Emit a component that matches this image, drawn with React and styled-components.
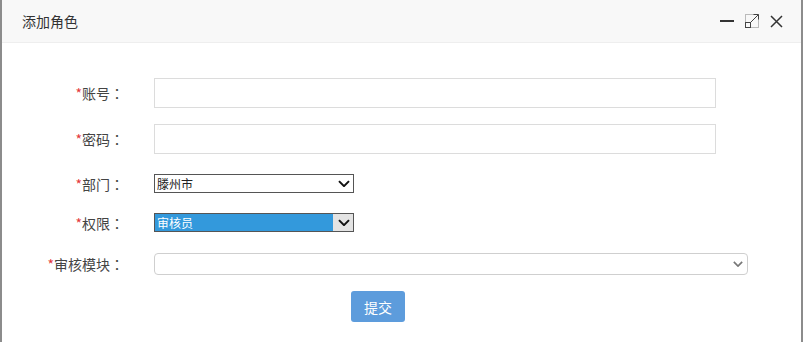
import React from 'react';
import styled, { createGlobalStyle } from 'styled-components';

const GlobalStyle = createGlobalStyle`
  html, body {
    margin: 0;
    padding: 0;
    background: #fff;
  }
  body {
    font-family: "Microsoft YaHei", "Noto Sans CJK SC", "Liberation Sans", sans-serif;
  }
`;

const Dialog = styled.div`
  width: 803px;
  height: 342px;
  box-sizing: border-box;
  border-left: 2px solid #8c8c8c;
  border-right: 2px solid #8c8c8c;
  background: #fff;
  overflow: hidden;
`;

const Header = styled.div`
  height: 42px;
  background: #f8f8f8;
  border-bottom: 1px solid #eee;
  display: flex;
  align-items: center;
  justify-content: space-between;
  padding: 0 17px 0 20px;
`;

const Title = styled.div`
  font-size: 14px;
  color: #333;
`;

const Tools = styled.div`
  display: flex;
  align-items: center;
  gap: 10px;
`;

const ToolBtn = styled.span`
  width: 15px;
  height: 15px;
  display: flex;
  align-items: center;
  justify-content: center;
  cursor: pointer;
`;

const Form = styled.form`
  padding-top: 35px;
  display: flex;
  flex-direction: column;
`;

const Row = styled.div`
  display: flex;
  align-items: center;
  height: ${(p) => p.h}px;
  margin-bottom: ${(p) => p.mb}px;
`;

const Label = styled.label`
  width: 122px;
  text-align: right;
  font-size: 14px;
  color: #444;
  flex-shrink: 0;
  margin-right: 30px;
  white-space: nowrap;
`;

const Star = styled.span`
  color: #e4393c;
`;

const Colon = styled.span`
  font-family: "Noto Sans CJK TC", sans-serif;
`;

const TextInput = styled.input`
  display: block;
  width: 562px;
  height: 30px;
  box-sizing: border-box;
  border: 1px solid #dcdcdc;
  outline: none;
  padding: 0 6px;
  font-size: 13px;
`;

const SelectWrap = styled.div`
  position: relative;
  width: ${(p) => p.w}px;
  height: ${(p) => p.h}px;
`;

const NativeSelect = styled.select`
  display: block;
  appearance: none;
  width: 100%;
  height: 100%;
  box-sizing: border-box;
  margin: 0;
  padding: 0 22px 0 2px;
  font-family: inherit;
  font-size: 12px;
  line-height: 1;
  border: 1px solid ${(p) => (p.soft ? '#cfcfcf' : '#555')};
  border-radius: ${(p) => (p.soft ? '4px' : '0')};
  background: ${(p) =>
    p.highlight
      ? 'linear-gradient(to right, #3399dc 0, #3399dc calc(100% - 20px), #e3e3e3 calc(100% - 20px))'
      : '#fff'};
  color: ${(p) => (p.highlight ? '#fff' : '#222')};
  outline: none;
`;

const Arrow = styled.span`
  position: absolute;
  right: ${(p) => p.r}px;
  top: 0;
  bottom: 0;
  display: flex;
  align-items: center;
  pointer-events: none;
`;

const SubmitRow = styled.div`
  padding-left: 349px;
`;

const Submit = styled.button`
  width: 54px;
  height: 31px;
  border: none;
  border-radius: 3px;
  background: #5d9cdc;
  color: #fff;
  font-family: inherit;
  font-size: 14px;
  cursor: pointer;
`;

const Chevron = ({ color = '#111', w = 12 }) => (
  <svg width={w} height={w * 0.6} viewBox="0 0 12 7">
    <path d="M1 1 L6 6 L11 1" fill="none" stroke={color} strokeWidth="2" />
  </svg>
);

const FieldLabel = ({ children }) => (
  <Label>
    <Star>*</Star>
    {children}
    <Colon>：</Colon>
  </Label>
);

export default function App() {
  return (
    <>
      <GlobalStyle />
      <Dialog>
        <Header>
          <Title>添加角色</Title>
          <Tools>
            <ToolBtn>
              <svg width="14" height="14" viewBox="0 0 14 14">
                <rect x="0" y="6" width="14" height="2" fill="#333" />
              </svg>
            </ToolBtn>
            <ToolBtn>
              <svg width="14" height="14" viewBox="0 0 14 14" fill="none" stroke="#444" strokeWidth="1">
                <rect x="0.5" y="0.5" width="13" height="13" stroke="#bbb" />
                <rect x="0.5" y="8.5" width="5" height="5" />
                <path d="M5.5 8.5 L13 1 M8.5 0.5 H13.5 V5.5" />
              </svg>
            </ToolBtn>
            <ToolBtn>
              <svg width="13" height="13" viewBox="0 0 13 13">
                <path d="M1 1 L12 12 M12 1 L1 12" stroke="#333" strokeWidth="1.5" />
              </svg>
            </ToolBtn>
          </Tools>
        </Header>
        <Form onSubmit={(e) => e.preventDefault()}>
          <Row h={30} mb={16}>
            <FieldLabel>账号</FieldLabel>
            <TextInput type="text" />
          </Row>
          <Row h={30} mb={20}>
            <FieldLabel>密码</FieldLabel>
            <TextInput type="password" />
          </Row>
          <Row h={19} mb={20}>
            <FieldLabel>部门</FieldLabel>
            <SelectWrap w={200} h={19}>
              <NativeSelect defaultValue="滕州市">
                <option>滕州市</option>
              </NativeSelect>
              <Arrow r={4}><Chevron /></Arrow>
            </SelectWrap>
          </Row>
          <Row h={19} mb={21}>
            <FieldLabel>权限</FieldLabel>
            <SelectWrap w={200} h={19}>
              <NativeSelect highlight defaultValue="审核员">
                <option>审核员</option>
              </NativeSelect>
              <Arrow r={4}><Chevron /></Arrow>
            </SelectWrap>
          </Row>
          <Row h={22} mb={16}>
            <FieldLabel>审核模块</FieldLabel>
            <SelectWrap w={594} h={22}>
              <NativeSelect soft defaultValue="">
                <option value=""></option>
              </NativeSelect>
              <Arrow r={5}><Chevron color="#777" w={10} /></Arrow>
            </SelectWrap>
          </Row>
          <SubmitRow>
            <Submit type="submit">提交</Submit>
          </SubmitRow>
        </Form>
      </Dialog>
    </>
  );
}
